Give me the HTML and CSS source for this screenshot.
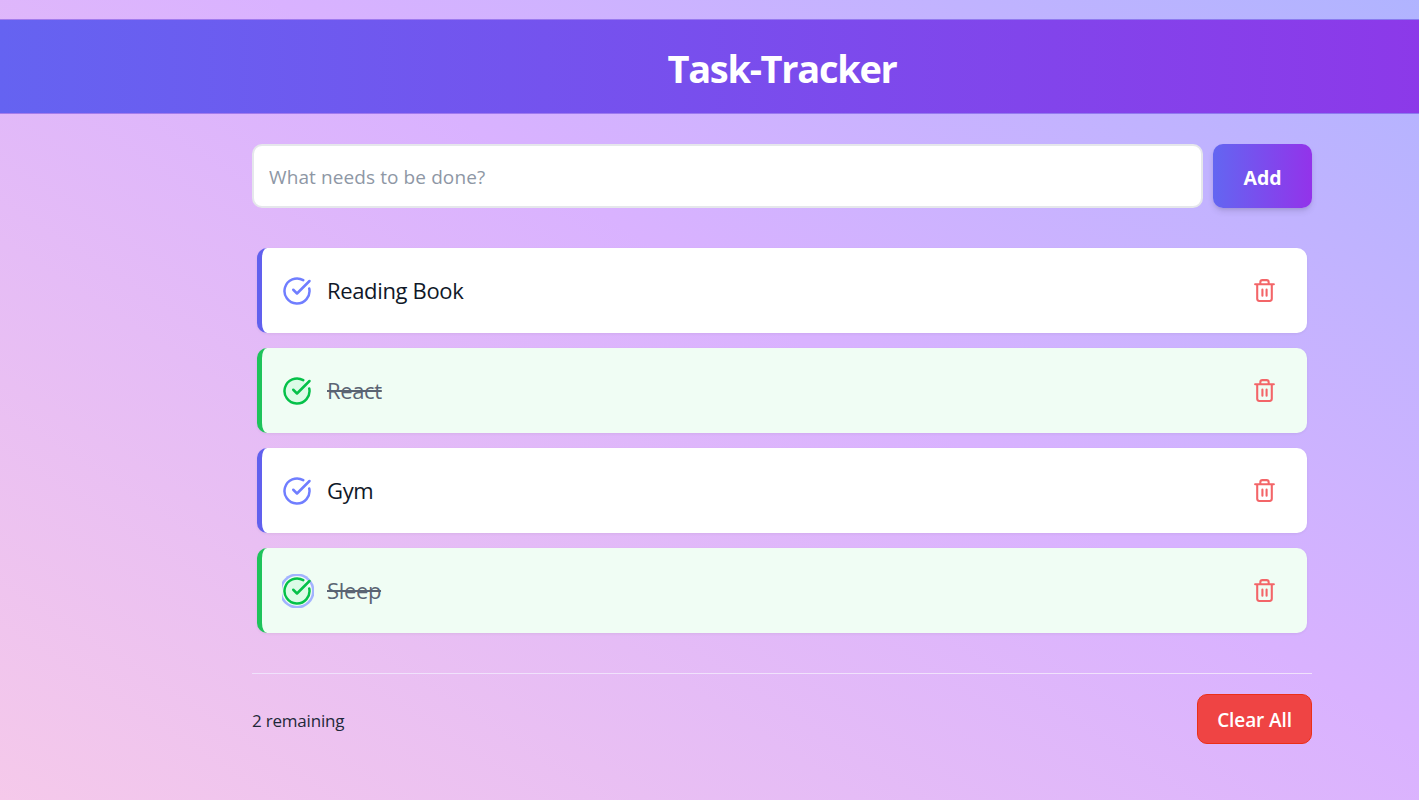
FILE: index.html
```html
<!DOCTYPE html>
<html lang="en">
<head>
<meta charset="utf-8">
<title>Task-Tracker</title>
<link rel="stylesheet" href="styles.css">
</head>
<body>
<svg class="sprite" aria-hidden="true">
  <symbol id="check" viewBox="0 0 24 24"><path d="M21.801 10A10 10 0 1 1 17 3.335"/><path class="tick" d="m9 11 3 3L22 4"/></symbol>
  <symbol id="trash" viewBox="0 0 24 24"><path d="M3 6h18M19 6v14a2 2 0 0 1-2 2H7a2 2 0 0 1-2-2V6M8 6V4a2 2 0 0 1 2-2h4a2 2 0 0 1 2 2v2M10 11v6M14 11v6"/></symbol>
</svg>
<div class="page">
  <header class="header"><h1 class="title">Task-Tracker</h1></header>
  <main class="container">
    <form class="add-form">
      <input class="task-input" type="text" placeholder="What needs to be done?">
      <button class="add-button" type="button">Add</button>
    </form>
    <ul class="tasks">
      <li class="task"><button class="toggle" type="button"><svg><use href="#check"/></svg></button><span class="label">Reading Book</span><button class="delete" type="button"><svg><use href="#trash"/></svg></button></li>
      <li class="task done"><button class="toggle" type="button"><svg><use href="#check"/></svg></button><span class="label">React</span><button class="delete" type="button"><svg><use href="#trash"/></svg></button></li>
      <li class="task"><button class="toggle" type="button"><svg><use href="#check"/></svg></button><span class="label">Gym</span><button class="delete" type="button"><svg><use href="#trash"/></svg></button></li>
      <li class="task done"><button class="toggle focused" type="button"><svg><use href="#check"/></svg></button><span class="label">Sleep</span><button class="delete" type="button"><svg><use href="#trash"/></svg></button></li>
    </ul>
    <footer class="footer">
      <span class="remaining">2 remaining</span>
      <button class="clear-button" type="button">Clear All</button>
    </footer>
  </main>
</div>
</body>
</html>
```
FILE: styles.css
```css
* { box-sizing: border-box; }
body {
  margin: 0;
  font-family: "Open Sans", "Noto Sans", sans-serif;
}
button { margin: 0; padding: 0; border: 0; background: none; font: inherit; }
.sprite { display: none; }
.page {
  height: 800px;
  padding-top: 19px;
  background: linear-gradient(33deg, #f5c9ea 0%, #d9b2ff 54%, #a8b4ff 103%) 0 0 / 1564px 800px no-repeat;
}
.header {
  display: flex;
  align-items: center;
  justify-content: center;
  height: 95px;
  padding-left: 145px;
  background: linear-gradient(to right, #6563f1, #9035e8) 0 0 / 1564px 100% no-repeat;
  border-top: 1px solid rgba(75, 35, 215, .4);
  border-bottom: 1px solid rgba(75, 35, 215, .4);
}
.title { margin: 0; padding-top: 3px; color: #fff; font-size: 38px; line-height: 50px; font-weight: 700; letter-spacing: -1.3px; }
.container { width: 1060px; margin: 30px 0 0 252px; }
.add-form { display: flex; gap: 10px; height: 64px; }
.task-input {
  flex: 1;
  min-width: 0;
  padding: 2px 15px 0;
  border: 2px solid #e5e7eb;
  border-radius: 10px;
  background: #fff;
  font: 400 19px "Open Sans", "Noto Sans", sans-serif;
  letter-spacing: .1px;
}
.task-input::placeholder { color: #8e97a5; opacity: 1; }
.add-button {
  width: 99px;
  padding-top: 2px;
  border-radius: 10px;
  background: linear-gradient(to right, #6366f1, #9333ea);
  box-shadow: 0 4px 7px -1px rgba(0, 0, 0, .12), 0 2px 4px -2px rgba(0, 0, 0, .12);
  color: #fff;
  font-size: 19.5px;
  font-weight: 700;
}
.tasks { display: grid; gap: 15px; margin: 40px 0 0; padding: 0 5px; list-style: none; }
.task {
  display: flex;
  align-items: center;
  height: 85px;
  padding: 0 30px 0 20px;
  border-left: 5px solid #6160ee;
  border-radius: 10px;
  background: #fff;
  box-shadow: 0 1px 3px rgba(0, 0, 0, .06);
}
.done { border-left-color: #1fc35b; background: #f0fdf4; }
.toggle { width: 32px; height: 34px; color: #707eff; overflow: hidden; }
.toggle svg {
  display: block;
  width: 30px;
  height: 30px;
  margin: 0;
  border-radius: 50%;
  overflow: visible;
  fill: none;
  stroke: currentColor;
  stroke-width: 2;
  stroke-linecap: round;
  stroke-linejoin: round;
}
.done .toggle { color: #05c149; }
.done .toggle svg { fill: #dcfce7; }
.tick { fill: none; }
.focused svg { box-shadow: 0 0 0 2.5px #a3b3ff; }
.label { flex: 1; padding: 0 0 1px 13px; color: #101828; font-size: 22px; line-height: 30px; letter-spacing: -.35px; }
.done .label { color: #5b6473; text-decoration: line-through; }
.delete { width: 25px; height: 25px; color: #f36568; }
.delete svg { display: block; width: 25px; height: 25px; fill: none; stroke: currentColor; stroke-width: 2; stroke-linecap: round; stroke-linejoin: round; }
.footer {
  display: flex;
  align-items: center;
  justify-content: space-between;
  margin-top: 40px;
  padding-top: 20px;
  border-top: 1px solid #f0e2fc;
}
.remaining { padding-top: 2px; color: #1e2939; font-size: 17px; letter-spacing: -.2px; }
.clear-button {
  width: 115px;
  height: 50px;
  padding-top: 2px;
  border: 1px solid #eb2f18;
  border-radius: 10px;
  background: #ef4444;
  color: #fff;
  font-size: 19px;
  font-weight: 600;
  letter-spacing: -.1px;
}
```
